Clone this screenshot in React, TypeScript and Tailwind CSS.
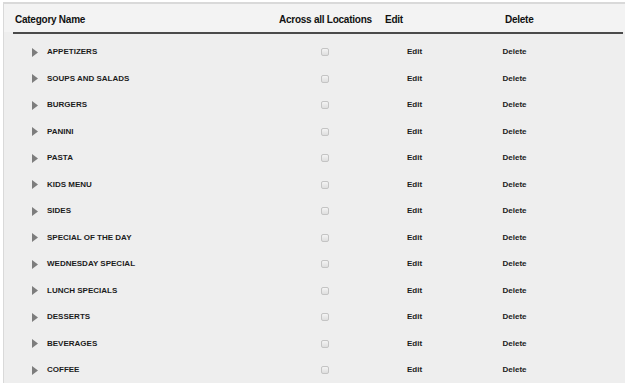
import React from "react";

const categories = [
  "APPETIZERS",
  "SOUPS AND SALADS",
  "BURGERS",
  "PANINI",
  "PASTA",
  "KIDS MENU",
  "SIDES",
  "SPECIAL OF THE DAY",
  "WEDNESDAY SPECIAL",
  "LUNCH SPECIALS",
  "DESSERTS",
  "BEVERAGES",
  "COFFEE",
];

function Arrow() {
  return (
    <svg width="6" height="9" viewBox="0 0 6 9" className="shrink-0">
      <polygon points="0,0 6,4.5 0,9" fill="#7d7d7d" />
    </svg>
  );
}

function CategoryRow({ name }: { name: string }) {
  return (
    <div className="flex items-center h-[26.5px] text-[8px] font-bold text-[#1c1c1c]">
      <div className="w-[286px] flex items-center pl-[28px]">
        <Arrow />
        <span className="ml-[9px]">{name}</span>
      </div>
      <div className="w-[70px] flex justify-center">
        {/* checkbox, always unchecked */}
        <div className="w-[8px] h-[8px] rounded-[2px] border border-[#c4c4c4] bg-gradient-to-b from-[#f4f4f4] to-[#dedede]" />
      </div>
      <div className="w-[109px] text-center">Edit</div>
      <div className="w-[91px] text-center">Delete</div>
    </div>
  );
}

export default function App() {
  return (
    <div
      className="w-[625px] h-[383px] bg-white pt-[2px] pl-[3px] overflow-hidden"
      style={{ fontFamily: '"Liberation Sans", Arial, sans-serif' }}
    >
      <div className="h-full border-t-2 border-l border-[#d9d9d9] bg-[#eeeeee]">
        {/* header */}
        <div className="h-[28px] flex items-center pl-[11px] pt-[2px] bg-[#f3f3f3] text-[10px] font-bold tracking-[-0.25px] text-[#111]">
          <div className="w-[264px]">Category Name</div>
          <div className="w-[106px]">Across all Locations</div>
          <div className="w-[120px]">Edit</div>
          <div>Delete</div>
        </div>
        <div className="h-[2px] ml-[9px] mr-[2px] bg-[#4a4a4a]" />

        <div className="pt-[5px]">
          {categories.map((c) => (
            <CategoryRow key={c} name={c} />
          ))}
        </div>
      </div>
    </div>
  );
}
